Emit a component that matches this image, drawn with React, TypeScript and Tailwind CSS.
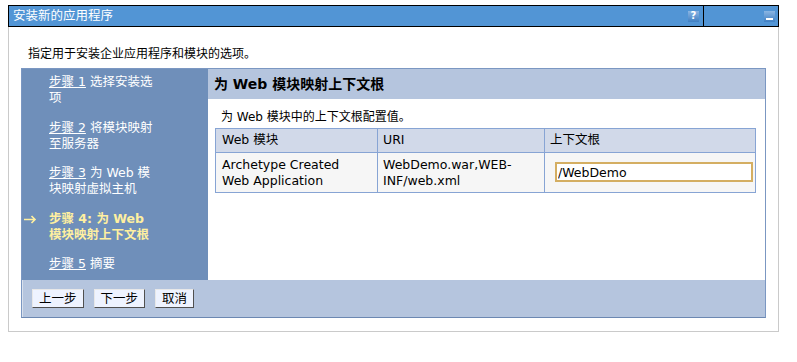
import React from 'react';

/* ─── Data ──────────────────────────────────────────────────────────────── */

// lines are split the way the wizard nav wraps them
const STEPS = [
  { n: '1', first: '选择安装选', rest: '项' },
  { n: '2', first: '将模块映射', rest: '至服务器' },
  { n: '3', first: '为 Web 模', rest: '块映射虚拟主机' },
  { n: '4', first: '为 Web', rest: '模块映射上下文根', current: true },
  { n: '5', first: '摘要' },
];

const FONT = { fontFamily: '"DejaVu Sans", Verdana, "Noto Sans CJK SC", sans-serif' };

/* ─── Icons ─────────────────────────────────────────────────────────────── */

function HelpIcon() {
  return (
    <span className="w-[11px] h-[11px] flex items-center justify-center bg-gradient-to-b from-[#8bb6e3] to-[#3f7fc2] text-white text-[10px] font-bold leading-none">
      ?
    </span>
  );
}

function MinimizeIcon() {
  return (
    <span className="w-[11px] h-[11px] flex items-end justify-center pb-[2px] bg-gradient-to-b from-[#8bb6e3] to-[#3f7fc2]">
      <span className="w-[7px] h-[2px] bg-white" />
    </span>
  );
}

function ArrowIcon() {
  return (
    <svg width="13" height="9" viewBox="0 0 13 9" className="mt-[4px] ml-[2px]">
      <path d="M0 4.5h11M7.5 1l3.5 3.5L7.5 8" fill="none" stroke="#fff0a0" strokeWidth="1.6" />
    </svg>
  );
}

/* ─── Page ──────────────────────────────────────────────────────────────── */

export default function App() {
  return (
    <div className="w-[797px] h-[362px] bg-white text-[12.5px] text-black" style={FONT}>
      <div className="pt-[5px] pl-[8px] w-[779px]">
        {/* Title bar */}
        <div className="h-[22px] border border-black bg-[#5295d5] flex">
          <div className="flex-1 flex items-center justify-between pl-[4px] pr-[4px]">
            <span className="text-white text-[12.5px]">安装新的应用程序</span>
            <HelpIcon />
          </div>
          <div className="w-[75px] border-l border-black flex items-center justify-end pr-[3px]">
            <MinimizeIcon />
          </div>
        </div>

        {/* Panel body */}
        <div className="border-x border-b border-[#cacaca] h-[305px] px-[12px] pt-[19px]">
          <p className="pl-[7px] text-[12px] leading-[16px]">指定用于安装企业应用程序和模块的选项。</p>

          {/* Wizard */}
          <div className="mt-[6px] w-[745px] border border-[#7b97c2] border-b-[#6c88b2]">
            <div className="flex h-[211px]">
              {/* Steps nav */}
              <nav className="w-[186px] bg-[#6f8fba] pt-[5px] text-white">
                {STEPS.map(s => (
                  <div key={s.n} className="flex mb-[13.5px] leading-[16px]">
                    <span className="w-[27px] shrink-0">
                      {s.current && <ArrowIcon />}
                    </span>
                    <span className={s.current ? 'font-bold text-[#fff0a0]' : ''}>
                      {s.current ? (
                        <>步骤 {s.n}: {s.first}</>
                      ) : (
                        <>
                          <span className="underline">步骤 {s.n}</span> {s.first}
                        </>
                      )}
                      {s.rest && (
                        <>
                          <br />
                          {s.rest}
                        </>
                      )}
                    </span>
                  </div>
                ))}
              </nav>

              {/* Content */}
              <div className="flex-1 bg-white">
                <div className="h-[30px] bg-[#b5c5de] flex items-center pl-[6px]">
                  <h2 className="font-bold text-[14px]">为 Web 模块映射上下文根</h2>
                </div>
                <div className="px-[7px] pt-[10px]">
                  <p className="pl-[6px] leading-[16px] text-[12px]">为 Web 模块中的上下文根配置值。</p>
                  <table className="mt-[3px] w-[541px] border-collapse">
                    <thead>
                      <tr className="bg-[#d1d9e9] h-[24px]">
                        <th className="w-[162px] border border-[#87a4d4] text-left font-normal px-[6px]">Web 模块</th>
                        <th className="w-[167px] border border-[#87a4d4] text-left font-normal px-[5px]">URI</th>
                        <th className="border border-[#87a4d4] text-left font-normal px-[5px]">上下文根</th>
                      </tr>
                    </thead>
                    <tbody>
                      <tr className="bg-[#f6f6f6] h-[40px]">
                        <td className="border border-[#87a4d4] px-[6px] leading-[16px]">
                          Archetype Created<br />Web Application
                        </td>
                        <td className="border border-[#87a4d4] px-[5px] leading-[16px]">
                          WebDemo.war,WEB-<br />INF/web.xml
                        </td>
                        <td className="border border-[#87a4d4] pl-[10px] pr-[2px]">
                          <input
                            defaultValue="/WebDemo"
                            className="w-[198px] h-[20px] border-2 border-[#d4ae62] bg-white px-[1px] text-[12.5px] outline-none"
                            style={FONT}
                          />
                        </td>
                      </tr>
                    </tbody>
                  </table>
                </div>
              </div>
            </div>

            {/* Footer buttons */}
            <div className="h-[37px] bg-[#b5c5de] border-l border-[#d8e0ec] flex items-center gap-[10px] pl-[9px]">
              {['上一步', '下一步', '取消'].map(b => (
                <button
                  key={b}
                  className="h-[19px] px-[6px] bg-[#eef3ff] border border-t-[#e8e8e8] border-l-[#e8e8e8] border-r-[#505050] border-b-[#505050] text-[12.5px] leading-[16px]"
                  style={FONT}
                >
                  {b}
                </button>
              ))}
            </div>
          </div>
        </div>
      </div>
    </div>
  );
}
